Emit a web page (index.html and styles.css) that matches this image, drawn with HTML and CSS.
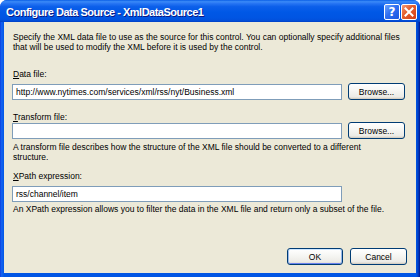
FILE: index.html
```html
<!DOCTYPE html>
<html>
<head>
<meta charset="utf-8">
<link rel="stylesheet" href="styles.css">
</head>
<body>
<div class="window">
  <div class="titlebar">
    <span class="title">Configure Data Source - XmlDataSource1</span>
    <div class="tb-buttons">
      <span class="tb-btn help">?</span>
      <span class="tb-btn close"><svg width="10" height="10" viewBox="0 0 10 10"><path d="M1.5 1.5 L8.5 8.5 M8.5 1.5 L1.5 8.5" stroke="#fff" stroke-width="2" stroke-linecap="square"/></svg></span>
    </div>
  </div>
  <div class="client">
    <p class="intro">Specify the XML data file to use as the source for this control. You can optionally specify additional files that will be used to modify the XML before it is used by the control.</p>

    <label class="lbl lbl-data"><u>D</u>ata file:</label>
    <div class="row row-data">
      <div class="input">http://www.nytimes.com/services/xml/rss/nyt/Business.xml</div>
      <button class="btn">Browse...</button>
    </div>

    <label class="lbl lbl-transform"><u>T</u>ransform file:</label>
    <div class="row row-transform">
      <div class="input"></div>
      <button class="btn">Browse...</button>
    </div>
    <p class="desc desc-transform">A transform file describes how the structure of the XML file should be converted to a different structure.</p>

    <label class="lbl lbl-xpath"><u>X</u>Path expression:</label>
    <div class="row row-xpath">
      <div class="input">rss/channel/item</div>
    </div>
    <p class="desc desc-xpath">An XPath expression allows you to filter the data in the XML file and return only a subset of the file.</p>

    <div class="footer">
      <button class="btn btn-default">OK</button>
      <button class="btn">Cancel</button>
    </div>
  </div>
</div>
</body>
</html>
```
FILE: styles.css
```css
* { box-sizing: border-box; }
html, body { margin: 0; padding: 0; }
body { width: 420px; height: 277px; overflow: hidden; background: #fff; font-family: "Liberation Sans", Arial, sans-serif; }

.window {
  width: 420px; height: 277px;
  display: flex; flex-direction: column;
  background: linear-gradient(90deg, #0831D9 0, #1660F0 1px, #0A5EEC 3px, #0055E5 4px, #0055E5 calc(100% - 4px), #0041C8 calc(100% - 2px), #00138C 100%);
  border-radius: 7px 7px 0 0;
  overflow: hidden;
}

.titlebar {
  height: 22px; flex: none;
  display: flex; align-items: center; justify-content: space-between;
  padding: 0 3px 0 6px;
  background: linear-gradient(180deg, #0A5FE6 0%, #3C8CF8 8%, #2A78F4 14%, #0C5FEA 30%, #0058E6 55%, #0055E3 80%, #0150DC 92%, #003FC6 100%);
}
.title {
  color: #fff; font-weight: bold; font-size: 11px;
  font-family: "Liberation Sans", Arial, sans-serif;
  text-shadow: 1px 1px 0 #0A1883;
  letter-spacing: -0.5px;
  margin-top: 1px;
}
.tb-buttons { display: flex; gap: 1px; margin-top: 2px; }
.tb-btn {
  width: 16px; height: 16px; border: 1px solid #fff; border-radius: 2px;
  display: flex; align-items: center; justify-content: center;
  color: #fff; font-weight: bold; font-size: 12px;
  font-family: "DejaVu Sans", sans-serif;
}
.help { background: linear-gradient(135deg, #6EA4FF 0%, #2F6FF0 45%, #1A55E0 100%); }
.close { background: linear-gradient(135deg, #F29A7A 0%, #E5602E 40%, #D13E17 100%); }

.client {
  flex: 1;
  margin: 0 4px 4px;
  background: #ECE9D8;
  padding: 10px 9px 0 8px;
  display: flex; flex-direction: column;
  font-size: 8.5px; color: #000;
}

.intro { margin: 0 0 0 1px; line-height: 10px; }
.lbl { display: block; line-height: 10px; margin-left: 1px; }
.lbl-data { margin-top: 17px; }
.lbl-transform { margin-top: 12px; }
.lbl-xpath { margin-top: 9px; }

.row { display: flex; align-items: center; gap: 6px; margin-top: 4px; height: 17px; }
.row-transform { margin-top: 0; }
.row-xpath { margin-top: 5px; height: 16px; }
.input {
  width: 330px; height: 16px; flex: none;
  background: #fff; border: 1px solid #7F9DB9;
  padding: 0 3px; line-height: 14px; white-space: nowrap;
}
.btn {
  font: inherit; color: #000;
  height: 17px; width: 57px; padding: 0; flex: none;
  border: 1px solid #003C74; border-radius: 3px;
  background: linear-gradient(180deg, #FFFFFF 0%, #F7F7F4 40%, #ECEBE6 85%, #D6D0C5 100%);
  box-shadow: inset 0 -1px 0 #D6D0C5;
  text-align: center;
}
.btn-default {
  width: 56px;
  box-shadow: inset 0 1px 0 #CEE7FF, inset 1px 0 0 #98B8EA, inset -1px 0 0 #98B8EA, inset 0 -1px 0 #6982EE;
}

.desc { margin: 3px 0 0 1px; line-height: 10px; }
.desc-transform { max-width: 352px; }
.desc-xpath { margin-top: 2px; }

.footer { margin-top: auto; margin-bottom: 8px; display: flex; justify-content: flex-end; gap: 7px; }
```
